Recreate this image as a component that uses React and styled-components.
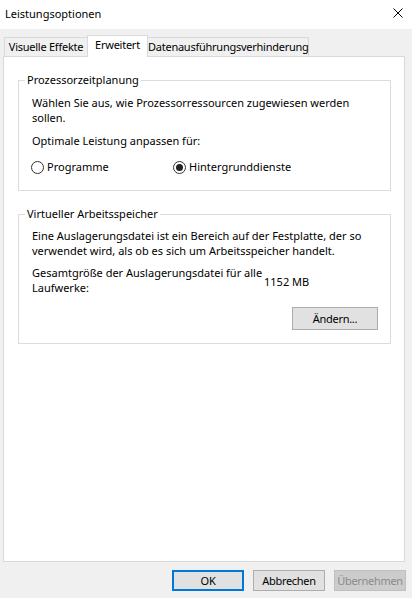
import React from 'react';
import styled, { createGlobalStyle } from 'styled-components';

const GlobalStyle = createGlobalStyle`
  *, *::before, *::after { box-sizing: border-box; }
  html, body {
    margin: 0;
    padding: 0;
    background: #f0f0f0;
  }
  body {
    font-family: "Noto Sans", "Open Sans", sans-serif;
    font-size: 11px;
    color: #000;
  }
`;

const Window = styled.div`
  width: 412px;
  height: 598px;
  display: flex;
  flex-direction: column;
  background: #f0f0f0;
  overflow: hidden;
`;

const TitleBar = styled.div`
  flex: none;
  height: 29px;
  background: #fff;
  display: flex;
  justify-content: space-between;
  align-items: flex-start;
  padding: 0 9px 0 5px;
`;

const Title = styled.div`
  padding-top: 6px;
  line-height: 16px;
`;

const CloseIcon = styled.svg`
  display: block;
  margin-top: 8px;
`;

const Body = styled.div`
  flex: 1;
  min-height: 0;
  display: flex;
  flex-direction: column;
  padding: 6px 7px 0 3px;
`;

const TabStrip = styled.div`
  flex: none;
  height: 21px;
  display: flex;
  align-items: flex-end;
  padding-left: 1px;
`;

const Tab = styled.div`
  position: relative;
  z-index: ${p => (p.$active ? 1 : 0)};
  width: ${p => p.$w}px;
  height: ${p => (p.$active ? 22 : 19)}px;
  margin-bottom: ${p => (p.$active ? -1 : 0)}px;
  margin-left: -1px;
  padding: 1px 0 0;
  border: 1px solid #d9d9d9;
  border-bottom: none;
  background: ${p => (p.$active ? '#fff' : '#f0f0f0')};
  line-height: 16px;
  letter-spacing: -0.25px;
  text-align: center;
  white-space: nowrap;
  &:first-child { margin-left: 0; }
`;

const Panel = styled.div`
  flex: 1;
  background: #fff;
  border: 1px solid #d9d9d9;
  padding: 15px 13px 0 14px;
`;

const Group = styled.fieldset`
  margin: 0;
  padding: 0;
  min-width: 0;
  border: 1px solid #dcdcdc;
  & + & { margin-top: 15px; }
`;

const Legend = styled.legend`
  margin-left: 6px;
  padding: 0 2px;
  line-height: 16px;
`;

const GroupBody = styled.div`
  display: flex;
  flex-direction: column;
  padding: ${p => p.$top}px 12px ${p => p.$bottom}px 13px;
`;

const Text = styled.p`
  margin: ${p => p.$mt || 0}px 0 0;
  line-height: 15px;
  white-space: nowrap;
`;

const RadioRow = styled.div`
  display: grid;
  grid-template-columns: 142px auto;
  margin-top: 11px;
  line-height: 16px;
`;

const RadioLabel = styled.label`
  display: flex;
  align-items: center;
  gap: 3px;
  margin-left: -1px;
`;

const RadioCircle = styled.span`
  width: 13px;
  height: 13px;
  border-radius: 50%;
  border: 1px solid #333;
  background: #fff;
  display: flex;
  align-items: center;
  justify-content: center;
  &::after {
    content: '';
    width: 7px;
    height: 7px;
    border-radius: 50%;
    background: ${p => (p.$checked ? '#222' : 'transparent')};
  }
`;

const SizeRow = styled.div`
  display: grid;
  grid-template-columns: 232px auto;
  align-items: center;
  margin-top: 7px;
  line-height: 15px;
`;

const SizeValue = styled.span`
  padding-top: 3px;
`;

const Button = styled.button`
  font: inherit;
  color: ${p => (p.disabled ? '#8b8b8b' : '#000')};
  width: ${p => p.$w}px;
  height: ${p => p.$h}px;
  padding: 0;
  background: ${p => (p.disabled ? '#cccccc' : '#e1e1e1')};
  border: ${p =>
    p.$primary ? '2px solid #0078d7' : p.disabled ? '1px solid #bfbfbf' : '1px solid #adadad'};
  line-height: 15px;
  letter-spacing: -0.3px;
  white-space: nowrap;
`;

const ChangeButton = styled(Button)`
  align-self: flex-end;
  margin-top: 12px;
`;

const Footer = styled.div`
  flex: none;
  display: flex;
  justify-content: flex-end;
  gap: 9px;
  padding: 8px 6px 7px;
`;

const Radio = ({ checked, children }) => (
  <RadioLabel>
    <RadioCircle $checked={checked} />
    {children}
  </RadioLabel>
);

export default function App() {
  return (
    <Window>
      <GlobalStyle />
      <TitleBar>
        <Title>Leistungsoptionen</Title>
        <CloseIcon width="10" height="10" viewBox="0 0 10 10">
          <path d="M0.5 0.5 L9.5 9.5 M9.5 0.5 L0.5 9.5" stroke="#000" strokeWidth="1" fill="none" />
        </CloseIcon>
      </TitleBar>
      <Body>
        <TabStrip>
          <Tab $w={84}>Visuelle Effekte</Tab>
          <Tab $w={61} $active>Erweitert</Tab>
          <Tab $w={162}>Datenausführungsverhinderung</Tab>
        </TabStrip>
        <Panel>
          <Group>
            <Legend>Prozessorzeitplanung</Legend>
            <GroupBody $top={7} $bottom={15}>
              <Text>
                Wählen Sie aus, wie Prozessorressourcen zugewiesen werden
                <br />
                sollen.
              </Text>
              <Text $mt={8}>Optimale Leistung anpassen für:</Text>
              <RadioRow>
                <Radio>Programme</Radio>
                <Radio checked>Hintergrunddienste</Radio>
              </RadioRow>
            </GroupBody>
          </Group>
          <Group>
            <Legend>Virtueller Arbeitsspeicher</Legend>
            <GroupBody $top={6} $bottom={13}>
              <Text>
                Eine Auslagerungsdatei ist ein Bereich auf der Festplatte, der so
                <br />
                verwendet wird, als ob es sich um Arbeitsspeicher handelt.
              </Text>
              <SizeRow>
                <Text>
                  Gesamtgröße der Auslagerungsdatei für alle
                  <br />
                  Laufwerke:
                </Text>
                <SizeValue>1152 MB</SizeValue>
              </SizeRow>
              <ChangeButton $w={86} $h={23}>Ändern...</ChangeButton>
            </GroupBody>
          </Group>
        </Panel>
      </Body>
      <Footer>
        <Button $w={72} $h={21} $primary>OK</Button>
        <Button $w={72} $h={21}>Abbrechen</Button>
        <Button $w={72} $h={21} disabled>Übernehmen</Button>
      </Footer>
    </Window>
  );
}
